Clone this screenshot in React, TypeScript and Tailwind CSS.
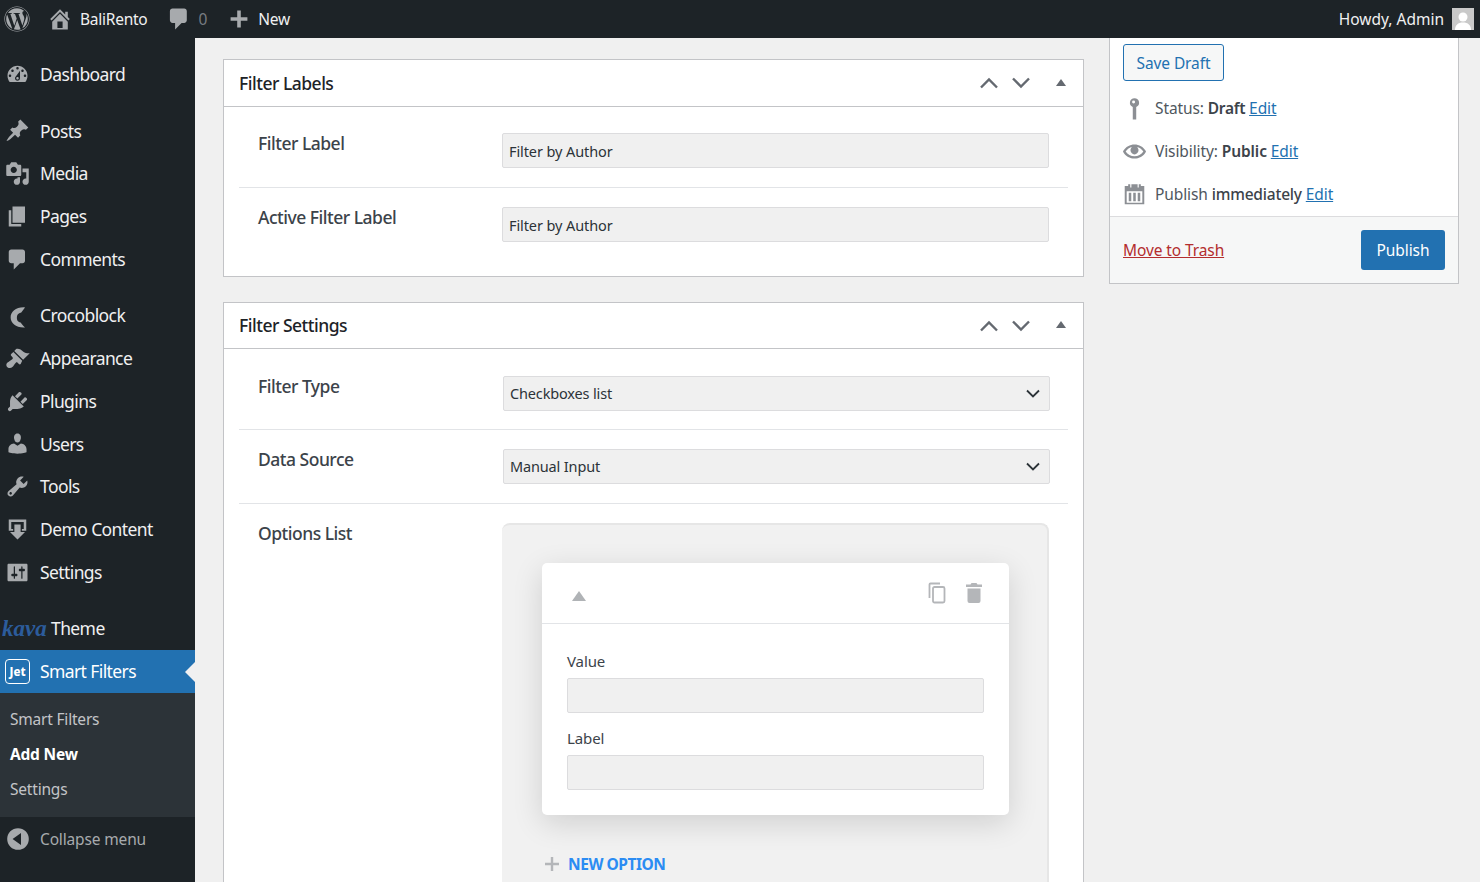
import { FaWordpress } from "react-icons/fa";

const paths = {
  home: "M16 8.5l1.53 1.53-1.06 1.06L10 4.62l-6.47 6.47-1.06-1.06L10 2.5l4 4v-2h2v4zm-6-2.46l6 5.99V18H4v-5.97zM12 17v-5H8v5h4z",
  comment: "M5 2h9c1.1 0 2 .9 2 2v7c0 1.1-.9 2-2 2h-2l-5 5v-5H5c-1.1 0-2-.9-2-2V4c0-1.1.9-2 2-2z",
  plus: "M17 8.500v3h-5.500V17h-3v-5.500H3v-3h5.500V3h3v5.500H17z",
  dashboard:
    "M3.76 16h12.48c1.1-1.37 1.76-3.11 1.76-5 0-4.42-3.58-8-8-8s-8 3.58-8 8c0 1.89.66 3.63 1.76 5zM10 4c.55 0 1 .45 1 1s-.45 1-1 1-1-.45-1-1 .45-1 1-1zM6 6c.55 0 1 .45 1 1s-.45 1-1 1-1-.45-1-1 .45-1 1-1zm8 0c.55 0 1 .45 1 1s-.45 1-1 1-1-.45-1-1 .45-1 1-1zm-5.37 5.55L12 7v6c0 1.1-.9 2-2 2s-2-.9-2-2c0-.57.24-1.08.63-1.45zM4 10c.55 0 1 .45 1 1s-.45 1-1 1-1-.45-1-1 .45-1 1-1zm12 0c.55 0 1 .45 1 1s-.45 1-1 1-1-.45-1-1 .45-1 1-1zm-5 3c0-.55-.45-1-1-1s-1 .45-1 1 .45 1 1 1 1-.45 1-1z",
  post: "M10.44 3.02l1.82-1.82 6.36 6.35-1.83 1.82c-1.05-.68-2.48-.57-3.41.36l-.75.75c-.92.93-1.04 2.35-.35 3.41l-1.83 1.82-2.41-2.41-2.8 2.79c-.42.42-3.38 2.71-3.8 2.29s1.86-3.39 2.28-3.81l2.79-2.79L4.1 9.36l1.83-1.82c1.05.69 2.48.57 3.4-.36l.75-.75c.93-.92 1.05-2.35.36-3.41z",
  media:
    "M13 11V4c0-.55-.45-1-1-1h-1.67L9 1H5L3.67 3H2c-.55 0-1 .45-1 1v7c0 .55.45 1 1 1h10c.55 0 1-.45 1-1zM7 4.5c1.38 0 2.5 1.12 2.5 2.5S8.38 9.5 7 9.5 4.5 8.38 4.5 7 5.62 4.5 7 4.5zM14 6h5v10.5c0 1.38-1.12 2.5-2.5 2.5S14 17.88 14 16.5s1.12-2.5 2.5-2.5c.17 0 .34.02.5.05V9h-3V6zm-4 8.05V13h2v3.5c0 1.38-1.12 2.5-2.5 2.5S7 17.88 7 16.5 8.12 14 9.5 14c.17 0 .34.02.5.05z",
  page: "M6 15V2h10v13H6zm-1 1h8v2H3V5h2v11z",
  croco:
    "M16 3.500C9 3 4.500 7 4.500 11.500S9 20 16 19.500c-1.500-1.500-2.500-2.500-3.500-4-2.500-.5-3-2-3-4s1-3.500 3.500-4c1-1.500 2-2.500 3-4z",
  appearance:
    "M14.48 11.06L7.41 3.99l1.5-1.5c.5-.56 2.3-.47 3.51.32 1.21.8 1.43 1.28 2.91 2.1 1.18.64 2.45 1.26 4.45.85zm-.71.71L6.7 4.7 4.93 6.47c-.39.39-.39 1.02 0 1.41l1.06 1.06c.39.39.39 1.03 0 1.42-.6.6-1.43 1.11-2.21 1.69-.35.26-.7.53-1.01.84C1.43 13.23.5 15.09 1.5 16.5c.99 1.4 3.3 1.44 4.63.11.31-.31.58-.66.84-1.01.58-.78 1.09-1.61 1.69-2.21.39-.39 1.02-.39 1.41 0l1.06 1.06c.39.39 1.02.39 1.41 0z",
  plugins:
    "M13.11 4.36L9.87 7.6 8 5.73l3.24-3.24c.35-.34 1.05-.2 1.56.32.52.51.66 1.21.31 1.55zm-8 1.77l.91-1.12 9.01 9.01-1.19.84c-.71.71-2.63 1.16-3.82 1.16H6.14L4.9 17.26c-.59.59-1.54.59-2.12 0-.59-.58-.59-1.53 0-2.12l1.24-1.24v-3.88c0-1.13.4-3.19 1.09-3.89zm7.26 3.97l3.24-3.24c.34-.35 1.04-.21 1.55.31.52.51.66 1.21.31 1.55l-3.24 3.25z",
  users:
    "M10 9.25c-2.27 0-2.73-3.44-2.73-3.44C7 4.02 7.82 2 9.97 2c2.16 0 2.98 2.02 2.71 3.81 0 0-.41 3.44-2.68 3.44zm0 2.57L12.72 10c2.39 0 4.52 2.33 4.52 4.53v2.49s-3.65 1.13-7.24 1.13c-3.65 0-7.24-1.13-7.24-1.13v-2.49c0-2.25 1.94-4.48 4.47-4.48z",
  tools:
    "M16.68 9.77c-1.34 1.34-3.3 1.67-4.95.99l-5.41 6.52c-.99.99-2.59.99-3.58 0s-.99-2.59 0-3.57l6.52-5.42c-.68-1.65-.35-3.61.99-4.95 1.28-1.28 3.12-1.62 4.72-1.06l-2.89 2.89 2.82 2.82 2.86-2.87c.53 1.58.18 3.39-1.08 4.65zM3.81 16.21c.4.39 1.04.39 1.43 0 .4-.4.4-1.04 0-1.43-.39-.4-1.03-.4-1.43 0-.39.39-.39 1.03 0 1.43z",
  demo: "M3 2h14v9h-3.500V9.500H15V4H5v5.500h1.500V11H3zM7.500 6h5v6H16l-6 6-6-6h3.500z",
  settings:
    "M18 16V4c0-.55-.45-1-1-1H3c-.55 0-1 .45-1 1v12c0 .55.45 1 1 1h14c.55 0 1-.45 1-1zM8 11h1c.55 0 1 .45 1 1s-.45 1-1 1H8v1.500c0 .28-.22.5-.5.5s-.5-.22-.5-.5V13H6c-.55 0-1-.45-1-1s.45-1 1-1h1V5.500c0-.28.22-.5.5-.5s.5.22.5.5V11zm5-2h-1c-.55 0-1-.45-1-1s.45-1 1-1h1V5.500c0-.28.22-.5.5-.5s.5.22.5.5V7h1c.55 0 1 .45 1 1s-.45 1-1 1h-1v5.500c0 .28-.22.5-.5.5s-.5-.22-.5-.5V9z",
  collapse: "M10 1a9 9 0 1 0 0 18 9 9 0 0 0 0-18zM12.500 5v10l-7-5z",
  pin: "M10 1a4 4 0 0 1 1.500 7.700V19.500H8.500V8.700A4 4 0 0 1 10 1zM9.200 3a1.300 1.300 0 1 0 0 2.600 1.300 1.300 0 0 0 0-2.600z",
  eye: "M19.700 9.400C17.700 6 14 3.900 10 3.900S2.300 6 .3 9.400L0 10l.3.6c2 3.400 5.700 5.500 9.700 5.500s7.700-2.100 9.700-5.500l.3-.6-.3-.6zM10 14.100c-3.100 0-6-1.600-7.700-4.100C3.600 8 5.700 6.600 8 6.100c-.9.6-1.500 1.700-1.500 2.900 0 1.900 1.600 3.500 3.500 3.500s3.500-1.600 3.500-3.500c0-1.200-.6-2.300-1.500-2.900 2.300.5 4.400 1.900 5.700 3.900-1.700 2.500-4.600 4.100-7.700 4.100z",
  calendar:
    "M4.500 1.500h1.800v2.800h1V1.500h5.400v2.800h1V1.500h1.800V3H18.500v16h-17V3h3zM3.200 7.500v10h13.600v-10zM5 9h2.200v7.200H5zM8.900 9h2.200v7.200H8.900zM12.800 9H15v7.200h-2.200z",
};

function Dash({ d, className }: { d: string; className: string }) {
  return (
    <svg viewBox="0 0 20 20" className={className} fill="currentColor" fillRule="evenodd">
      <path d={d} />
    </svg>
  );
}

type MenuItem = { label: string; icon: string; mt?: boolean };

const menuTop: MenuItem[] = [
  { label: "Dashboard", icon: paths.dashboard },
  { label: "Posts", icon: paths.post, mt: true },
  { label: "Media", icon: paths.media },
  { label: "Pages", icon: paths.page },
  { label: "Comments", icon: paths.comment },
  { label: "Crocoblock", icon: paths.croco, mt: true },
  { label: "Appearance", icon: paths.appearance },
  { label: "Plugins", icon: paths.plugins },
  { label: "Users", icon: paths.users },
  { label: "Tools", icon: paths.tools },
  { label: "Demo Content", icon: paths.demo },
  { label: "Settings", icon: paths.settings },
];

function SideItem({ item }: { item: MenuItem }) {
  return (
    <div className={`flex h-[42.75px] items-center ${item.mt ? "mt-[13.7px]" : ""}`}>
      <div className="flex w-[40px] justify-center pr-[5px] text-[#a7aaad]">
        <Dash d={item.icon} className="h-[25px] w-[25px]" />
      </div>
      <span className="text-[17.500px] tracking-[-0.6px] text-[#f0f0f1]">{item.label}</span>
    </div>
  );
}

function Sidebar() {
  return (
    <aside className="flex w-[195px] shrink-0 flex-col bg-[#1d2327] pt-[15px]">
      {menuTop.map((item) => (
        <SideItem key={item.label} item={item} />
      ))}
      <div className="mt-[13.6px] flex h-[43px] items-center">
        <span className="w-[51px] pl-[2px] font-['Liberation_Serif',serif] text-[23px] font-bold italic leading-none text-[#2c5c9c]">
          kava
        </span>
        <span className="text-[17.500px] tracking-[-0.6px] text-[#f0f0f1]">Theme</span>
      </div>
      <div className="relative flex h-[43px] items-center bg-[#2271b1]">
        <div className="flex w-[40px] justify-center pr-[5px]">
          <div className="flex h-[25px] w-[25px] items-center justify-center rounded-[4px] border border-white text-[11.500px] font-extrabold leading-none text-white">
            Jet
          </div>
        </div>
        <span className="text-[17.500px] tracking-[-0.6px] text-white">Smart Filters</span>
        <div className="absolute right-0 top-[12px] h-0 w-0 border-y-[10px] border-r-[10px] border-y-transparent border-r-[#f0f0f1]" />
      </div>
      <div className="flex h-[124px] flex-col justify-center gap-[14px] bg-[#2c3338] pl-[10px] text-[15.500px] leading-[21px] tracking-[-0.2px] text-[#c3c4c7]">
        <span>Smart Filters</span>
        <span className="font-bold text-white">Add New</span>
        <span>Settings</span>
      </div>
      <div className="flex h-[44px] items-center pt-[1px]">
        <div className="flex w-[40px] justify-center pr-[5px] text-[#a7aaad]">
          <Dash d={paths.collapse} className="h-[24px] w-[24px]" />
        </div>
        <span className="text-[15.500px] tracking-[-0.15px] text-[#a7aaad]">Collapse menu</span>
      </div>
    </aside>
  );
}

function TopBar() {
  return (
    <header className="flex h-[38px] shrink-0 items-center bg-[#1d2327] text-[15.500px] tracking-[-0.15px] text-[#f0f0f1]">
      <FaWordpress className="ml-[4px] h-[26px] w-[26px] text-[#a7aaad]" />
      <Dash d={paths.home} className="ml-[17px] h-[26px] w-[26px] text-[#a7aaad]" />
      <span className="ml-[7px] pt-[1px] tracking-[-0.25px]">BaliRento</span>
      <Dash d={paths.comment} className="ml-[19px] h-[26px] w-[26px] text-[#a7aaad]" />
      <span className="ml-[6px] pt-[1px] text-[#787c82]">0</span>
      <Dash d={paths.plus} className="ml-[20px] h-[24px] w-[24px] text-[#a7aaad]" />
      <span className="ml-[7px] pt-[1px]">New</span>
      <span className="ml-auto pt-[1px] tracking-[0px]">Howdy, Admin</span>
      <div className="ml-[8px] mr-[6px] flex h-[22px] w-[22px] items-end justify-center overflow-hidden bg-[#c9c9c9]">
        <svg viewBox="0 0 20 20" className="h-[20px] w-[20px]" fill="#fff">
          <circle cx="10" cy="7" r="4.500" />
          <path d="M2 20c0-5 3-7.500 8-7.500s8 2.500 8 7.500z" />
        </svg>
      </div>
    </header>
  );
}

function Chevron({ up }: { up?: boolean }) {
  return (
    <svg viewBox="0 0 20 12" className="h-[12px] w-[20px]" fill="none" stroke="#646970" strokeWidth="2.400">
      <path d={up ? "M2 10.500l8-8 8 8" : "M2 1.500l8 8 8-8"} />
    </svg>
  );
}

function BoxHeader({ title, h }: { title: string; h: string }) {
  return (
    <div className={`flex items-center border-b border-[#c3c4c7] pl-[15px] ${h}`}>
      <h2 className="text-[17.500px] font-medium tracking-[-0.5px] text-[#1d2327]">{title}</h2>
      <div className="ml-auto flex items-center gap-[12px] pr-[17px]">
        <Chevron up />
        <Chevron />
        <div className="mb-[2px] ml-[13px] h-0 w-0 border-x-[5px] border-b-[7px] border-x-transparent border-b-[#646970]" />
      </div>
    </div>
  );
}

function TextRow({ label, value, pt, pb, border }: { label: string; value: string; pt: string; pb: string; border?: boolean }) {
  return (
    <div className={`mx-[15px] flex ${pt} ${pb} ${border ? "border-b border-[#e2e4e7]" : ""}`}>
      <label className="w-[263px] shrink-0 pl-[19px] text-[17.500px] font-medium leading-[20px] tracking-[-0.5px] text-[#3c434a]">
        {label}
      </label>
      <input
        readOnly
        value={value}
        className="h-[35px] w-[547px] rounded-[2px] border border-[#dcdcde] bg-[#f0f0f0] px-[6px] font-['Noto_Sans',sans-serif] text-[14.500px] tracking-[-0.1px] text-[#2c3338] outline-none"
      />
    </div>
  );
}

function SelectRow({ label, value, pt, pb }: { label: string; value: string; pt: string; pb: string }) {
  return (
    <div className={`mx-[15px] flex border-b border-[#e2e4e7] ${pt} ${pb}`}>
      <label className="w-[264px] shrink-0 pl-[19px] text-[17.500px] font-medium leading-[20px] tracking-[-0.5px] text-[#3c434a]">
        {label}
      </label>
      <div className="flex h-[35px] w-[547px] items-center justify-between rounded-[2px] border border-[#dcdcde] bg-[#f0f0f0] pl-[6px] pr-[9px] text-[14.500px] tracking-[-0.15px] text-[#2c3338]">
        <span>{value}</span>
        <svg viewBox="0 0 14 9" className="h-[9px] w-[14px]" fill="none" stroke="#2c3338" strokeWidth="1.800">
          <path d="M1 1.500l6 6 6-6" />
        </svg>
      </div>
    </div>
  );
}

function OptionField({ label }: { label: string }) {
  return (
    <div>
      <div className="text-[15px] leading-[20px] tracking-[-0.1px] text-[#3c434a]">{label}</div>
      <div className="mt-[7px] h-[35px] rounded-[2px] border border-[#dcdcde] bg-[#f0f0f0]" />
    </div>
  );
}

function OptionsList() {
  return (
    <div className="mx-[15px] flex pt-[19px]">
      <label className="w-[263px] shrink-0 pl-[19px] text-[17.500px] font-medium leading-[20px] tracking-[-0.5px] text-[#3c434a]">
        Options List
      </label>
      <div className="h-[500px] w-[547px] rounded-[8px] border-r-2 border-t-2 border-[#e6e6e6] bg-[#f1f1f1] pl-[40px] pr-[38px] pt-[38px]">
        <div className="rounded-[5px] bg-white shadow-[0_8px_30px_rgba(0,0,0,0.14)]">
          <div className="flex h-[61px] items-center border-b border-[#e2e4e7] px-[25px]">
            <div className="ml-[5px] mt-[5px] h-0 w-0 border-x-[7px] border-b-[10px] border-x-transparent border-b-[#b0b3b6]" />
            <div className="ml-auto flex items-center gap-[17px]">
              <svg viewBox="0 0 20 22" className="h-[22px] w-[20px]" fill="none" stroke="#b4b6b9" strokeWidth="1.800">
                <path d="M2.500 16V2.500a1 1 0 0 1 1-1H13" />
                <rect x="6" y="5" width="11.500" height="15.500" rx="1.500" />
              </svg>
              <svg viewBox="0 0 20 22" className="h-[22px] w-[20px]" fill="#b4b6b9">
                <path d="M7.500 1h5l1 1.500H18V5H2V2.500h4.500zM3.500 6.500h13V19a2 2 0 0 1-2 2h-9a2 2 0 0 1-2-2z" />
              </svg>
            </div>
          </div>
          <div className="flex flex-col gap-[15px] px-[25px] pb-[25px] pt-[27px]">
            <OptionField label="Value" />
            <OptionField label="Label" />
          </div>
        </div>
        <div className="ml-[3px] mt-[39px] flex items-center gap-[9px]">
          <svg viewBox="0 0 14 14" className="h-[14px] w-[14px]" fill="#b4b6b9">
            <path d="M5.800 0h2.400v5.800H14v2.400H8.200V14H5.800V8.200H0V5.800h5.800z" />
          </svg>
          <span className="text-[15.500px] font-bold leading-[20px] tracking-[-0.45px] text-[#2b8cf3]">NEW OPTION</span>
        </div>
      </div>
    </div>
  );
}

function PublishBox() {
  const link = "text-[#2271b1] underline";
  return (
    <aside className="h-[246px] w-[350px] shrink-0 border-x border-b border-[#c3c4c7] bg-white text-[15.500px] tracking-[-0.1px] text-[#50575e]">
      <div className="pl-[13px] pt-[6px]">
        <button className="h-[37px] w-[101px] rounded-[3px] border border-[#2271b1] bg-[#f6f7f7] pt-[2px] text-[15.500px] tracking-[-0.1px] text-[#2271b1]">
          Save Draft
        </button>
      </div>
      <div className="mt-[6px] flex flex-col pl-[13px]">
        <div className="flex h-[43px] items-center gap-[9px]">
          <Dash d={paths.pin} className="h-[23px] w-[23px] text-[#8c8f94]" />
          <span>
            Status: <b className="font-semibold tracking-[-0.3px] text-[#3c434a]">Draft</b> <span className={link}>Edit</span>
          </span>
        </div>
        <div className="flex h-[43px] items-center gap-[9px]">
          <Dash d={paths.eye} className="h-[23px] w-[23px] text-[#8c8f94]" />
          <span>
            Visibility: <b className="font-semibold text-[#3c434a]">Public</b> <span className={link}>Edit</span>
          </span>
        </div>
        <div className="flex h-[43px] items-center gap-[9px]">
          <Dash d={paths.calendar} className="mb-[2px] h-[24px] w-[23px] text-[#8c8f94]" />
          <span>
            Publish <b className="font-medium tracking-[-0.2px] text-[#3c434a]">immediately</b> <span className={link}>Edit</span>
          </span>
        </div>
      </div>
      <div className="flex h-[67px] items-center justify-between border-t border-[#dcdcde] bg-[#f6f7f7] px-[13px]">
        <span className="pt-[1px] text-[#b32d2e] underline">Move to Trash</span>
        <button className="h-[40px] w-[84px] rounded-[3px] bg-[#2271b1] pt-[1px] text-[15.500px] text-white">Publish</button>
      </div>
    </aside>
  );
}

export default function App() {
  return (
    <div className="flex h-[882px] w-[1480px] flex-col overflow-hidden bg-[#f0f0f0] font-['Noto_Sans',sans-serif]">
      <TopBar />
      <div className="flex min-h-0 flex-1">
        <Sidebar />
        <main className="flex flex-1 items-start gap-[25px] pl-[28px]">
          <div className="flex w-[861px] shrink-0 flex-col gap-[25px] pt-[21px]">
            <section className="border border-[#c3c4c7] bg-white">
              <BoxHeader title="Filter Labels" h="h-[47px]" />
              <TextRow label="Filter Label" value="Filter by Author" pt="pt-[26px]" pb="pb-[19px]" border />
              <TextRow label="Active Filter Label" value="Filter by Author" pt="pt-[19px]" pb="pb-[34px]" />
            </section>
            <section className="border border-[#c3c4c7] bg-white">
              <BoxHeader title="Filter Settings" h="h-[46px]" />
              <SelectRow label="Filter Type" value="Checkboxes list" pt="pt-[27px]" pb="pb-[18px]" />
              <SelectRow label="Data Source" value="Manual Input" pt="pt-[19px]" pb="pb-[19px]" />
              <OptionsList />
            </section>
          </div>
          <PublishBox />
        </main>
      </div>
    </div>
  );
}
